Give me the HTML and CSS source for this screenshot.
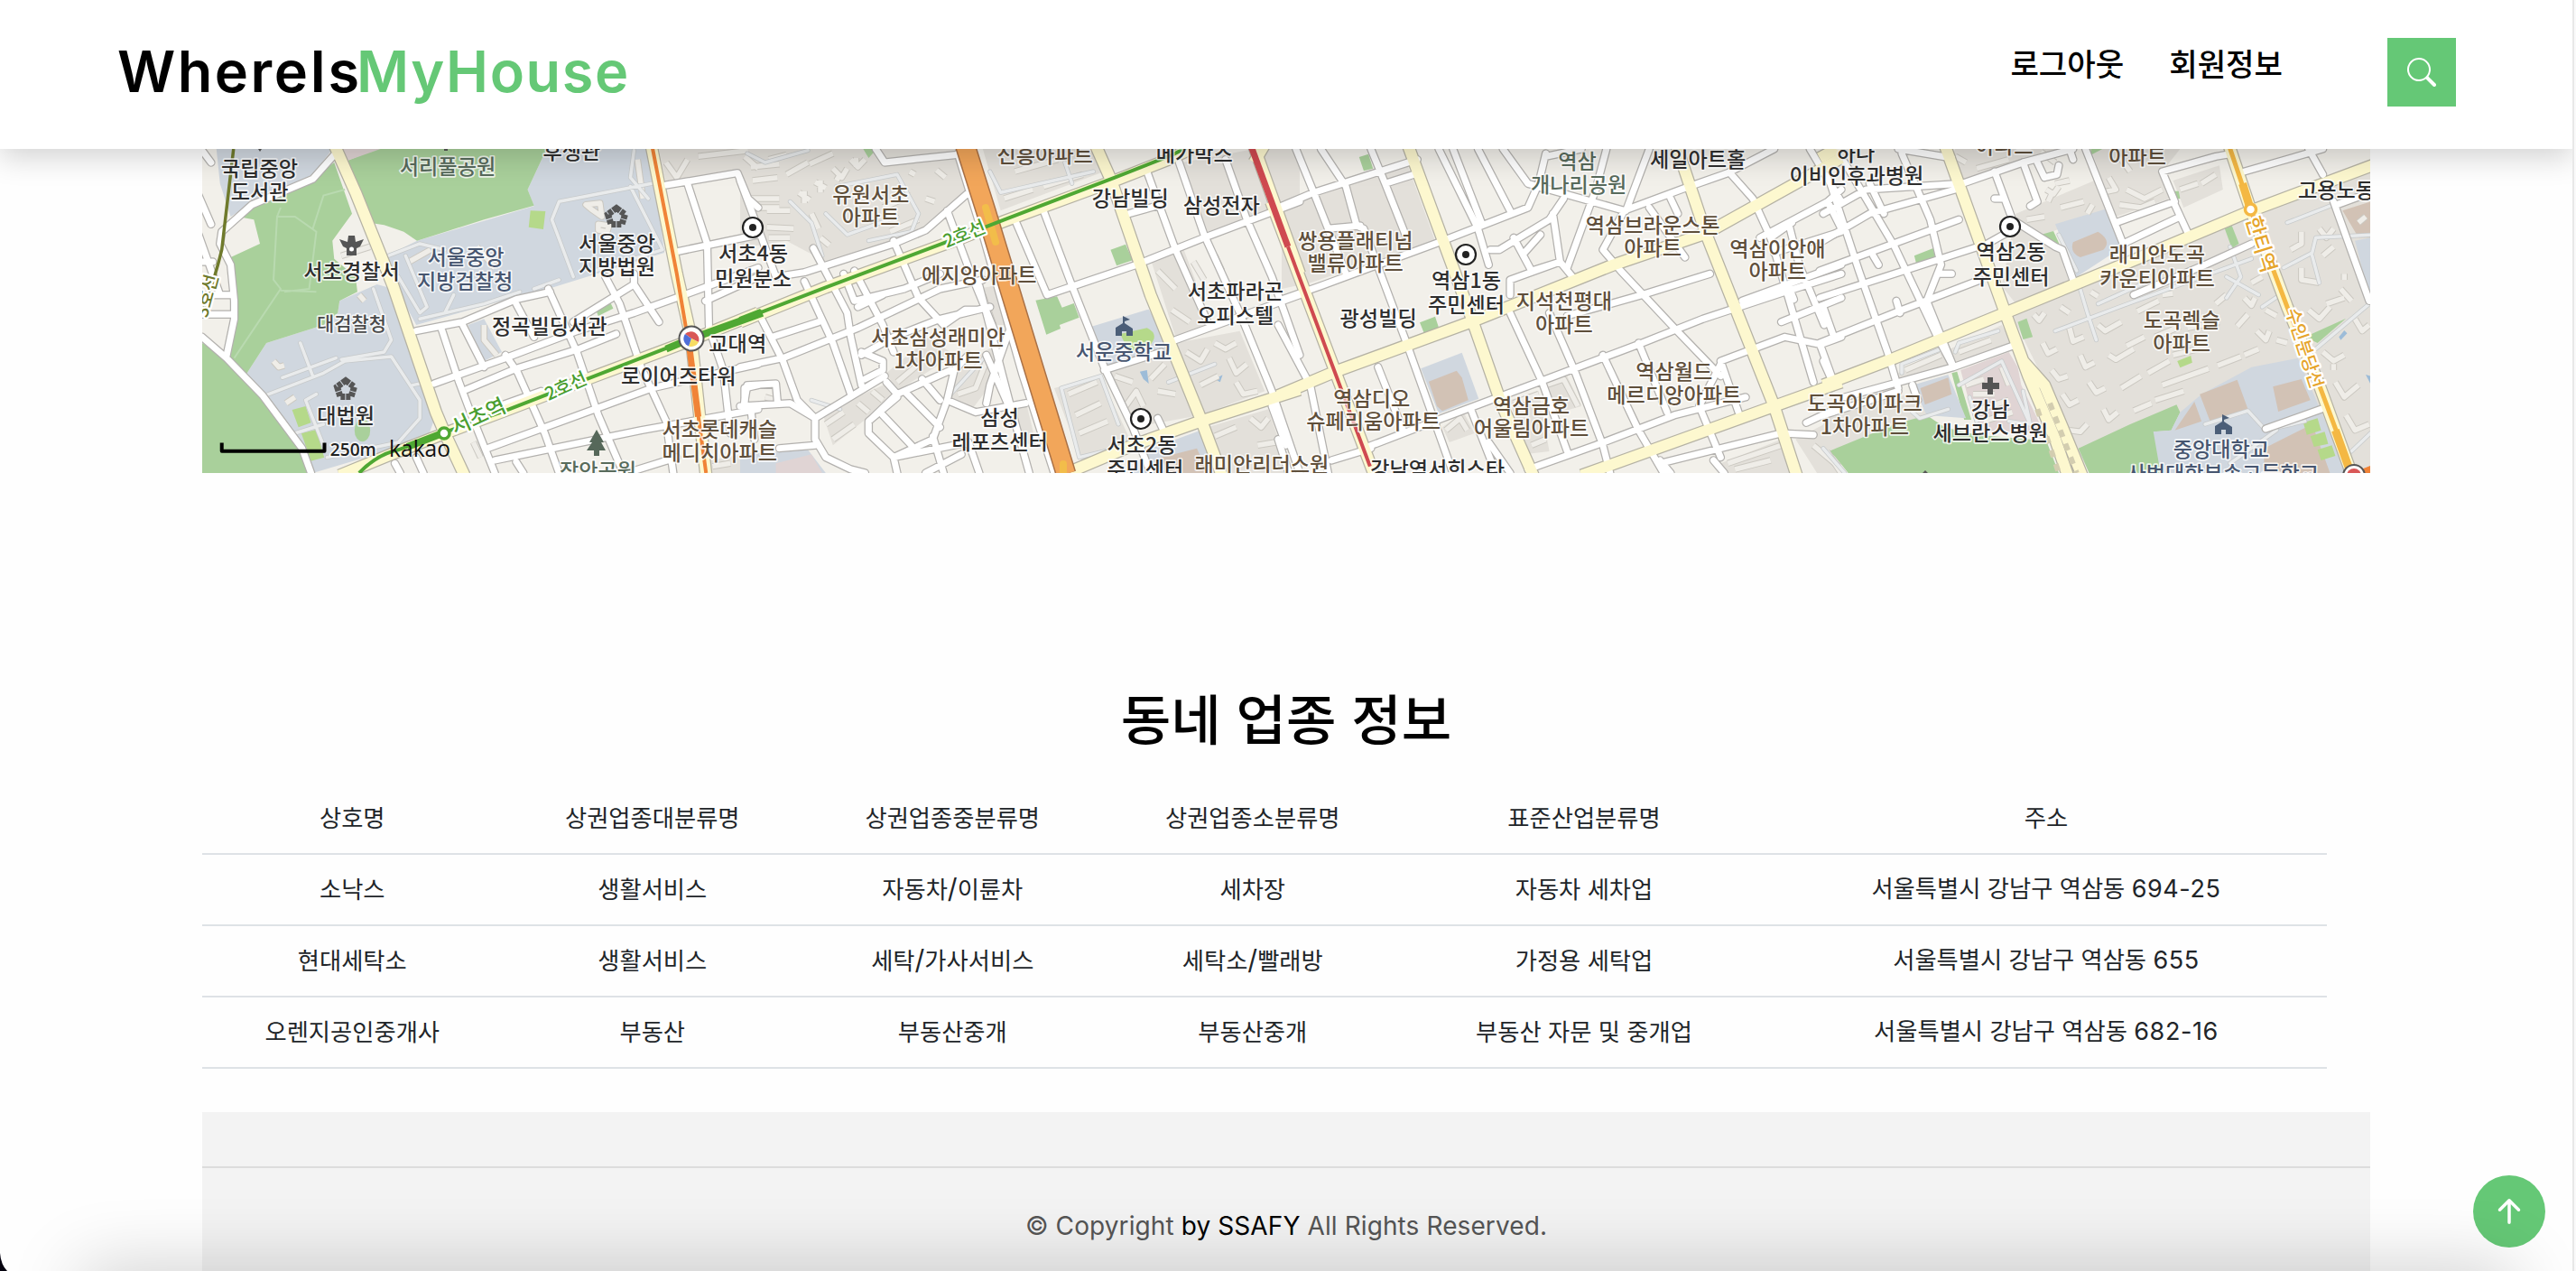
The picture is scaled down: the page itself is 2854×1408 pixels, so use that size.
FILE: index.html
```html
<!DOCTYPE html>
<html lang="ko">
<head>
<meta charset="utf-8">
<title>WhereIsMyHouse</title>
<link rel="stylesheet" href="styles.css">
</head>
<body>
<header class="header">
  <a class="logo"><span class="logo-where">WhereIs</span><span class="logo-house">MyHouse</span></a>
  <nav class="nav"><a>로그아웃</a><a>회원정보</a></nav>
  <button class="search" aria-label="검색">
    <svg width="32" height="32" viewBox="0 0 16 16" fill="currentColor"><path d="M11.742 10.344a6.5 6.5 0 1 0-1.397 1.398h-.001c.03.04.062.078.098.115l3.85 3.85a1 1 0 0 0 1.415-1.414l-3.85-3.85a1.007 1.007 0 0 0-.115-.1zM12 6.5a5.5 5.5 0 1 1-11 0 5.5 5.5 0 0 1 11 0z"/></svg>
  </button>
</header>

<main class="page">
  <svg class="map" viewBox="224 165 2402 359" width="2402" height="359">
    <defs>
      <g id="minor">
        <g transform="translate(220 160) scale(.3954 .3333)">
          <path d="M10 640L78 710L180 835L290 1010L315 1092M380 35L320 115L150 200L65 290L60 330L90 400L100 520V580L78 705M10 565H95M10 500H95M0 300L60 500M0 170L35 265M10 390H40M10 20L35 60"/>
          <path d="M610 620L740 590L890 515L985 490M980 480L1060 690L1120 900L1190 1092M680 610L730 790L765 900L830 1092M740 600L800 740M890 530L940 640M660 795L860 710L1060 620L1220 560L1350 505L1568 410M750 815L890 745L1065 680L1170 630M860 700L895 760L970 960L1010 1092"/>
          <path d="M1140 440L1180 530L1240 740L1310 920L1330 1092M1050 590L1220 465V430M1220 465L1290 590M770 900L960 820M810 1010L1110 880L1270 810L1568 730M830 1050L1240 950L1568 880M1310 135L1510 95L1540 180L1568 210M1345 355L1568 300M1370 130L1425 330L1430 600M1430 610L1470 750L1490 960M1200 1092L1340 1040M1420 520L1568 440M550 1060L565 1092M610 1040L630 1092M890 1055L910 1092M1530 880V810L1568 800"/>
        </g>
        <g transform="translate(820 160) scale(.3954 .3333)">
          <path d="M0 120L60 310L100 440M100 440L180 425L430 330L520 285L640 160M380 15L405 60L480 50L600 35M205 345L300 560L310 640L340 800M290 430L320 520L460 480L560 430M180 455L260 660L310 830M60 580L120 720L160 850L210 910M0 740L120 710L330 610L560 480L680 450M90 640L220 590M320 420L400 600L430 690M330 540L400 500M430 320L500 510L570 600L630 550H665M580 220L640 410L720 640M340 700L430 640L560 580L700 540M610 30L680 300L790 760L880 1092M670 470L760 880L810 1092"/>
          <path d="M350 780L400 750V720L340 690M405 770L210 910V980L240 1040L310 1080L350 1092M440 840L360 920V960L430 1040L540 980L580 850L600 750L640 700M440 830L590 750M460 820L560 940M510 780L560 850M400 900L480 1000M410 790L440 830L370 910M580 850L660 890L800 860M690 860L700 800L760 600M690 700L760 890M430 1040L440 1092M430 1040L640 990L670 1092M540 970L570 1092M0 870L140 860L210 910M10 870L20 800L100 795L105 860M30 880L40 980M110 1010L210 1000M520 1092L620 1030"/>
          <path d="M770 250L860 500L1110 400L1300 310L1568 190M850 220L930 470L1020 740L1100 940L1150 1092M1140 90L1220 350L1310 590M1230 60L1300 300L1400 560L1490 820L1568 1092M1360 50L1420 250L1490 440L1568 700M1090 230L1180 200M1220 650L1568 500M1020 750L1180 690M1170 910L1190 960M1490 870L1530 1000"/>
        </g>
        <g transform="translate(1420 160) scale(.3954 .3333)">
          <path d="M-10 210L90 160L380 50M40 15L90 160L180 430M110 15L180 140L210 270L230 280L350 660L480 1092M130 280L220 270M250 15L290 130L350 310M290 130L370 100M-10 520L110 470L430 330L690 210L720 130L740 30M440 15L550 280L580 400M480 15L560 260M550 15L640 220M620 15L690 130L960 220M740 40L840 15M910 15L880 150L800 410M1030 15L965 220M1380 15L1250 95L1130 145L960 220L900 350L950 420L1100 610L1230 770M1260 100L1320 180L1370 310L1490 790M1090 180L1110 230M1030 210L1130 375"/>
          <path d="M585 350H610L750 250L790 180M650 310L700 420M680 360L725 300M760 230L780 390L640 450V500M780 390L815 440M700 420L780 390M640 560L730 790L800 1020M750 560L820 750L900 1000L920 1092M900 700L1000 950L1070 1092M800 570L1010 500L1200 430M-10 600L80 800L130 1092M-10 980L20 1092M270 740L340 950M230 1010L450 910L720 790L1010 660L1180 580L1410 490L1568 430M530 880L600 1092M580 990L640 1092M1000 660L1080 890M1230 730L1170 870L1230 1040M1230 720L1280 890M690 1080L880 1000L1100 900L1300 840M1060 1060L1400 960L1490 965M1090 1092L1060 1050M1230 720L1410 640L1510 665L1568 640M1510 670L1550 800M1400 590L1568 510M1420 260L1450 400L1520 600M1530 190L1568 280M1340 310L1530 190L1568 150M1370 310L1430 260M1420 470L1435 515M1290 520L1568 400M1470 925L1568 870M1210 1050L1240 1092M140 1050L250 1010M1480 15L1568 190M1380 360L1568 290"/>
        </g>
        <g transform="translate(2020 160) scale(.3954 .3333)">
          <path d="M0 230L120 150L390 130L560 60L700 15M60 60L200 340L320 640L365 740M130 130L170 230M220 30L300 250L330 400L290 520L365 740M0 320L130 230L370 150M-10 420L380 250M-10 510L460 330L520 290M-10 660L210 555L440 450M20 130L100 420L180 690L210 810M0 540L30 640M0 720L30 800M140 370L155 400M330 430L360 430M205 520L215 560M250 800L265 850M60 840L365 740L530 670M0 900L210 820M210 15L360 45"/>
          <path d="M480 90L530 250L650 340L670 350L700 450M560 60L600 190L580 205M500 180H480M600 60L620 110L655 100L660 70M690 15L700 50M735 15L840 330L1000 240M820 260L985 190L950 90L1100 40L1150 30M985 200L1020 290M870 500L1070 400L1200 330M1180 90L1400 15M1360 15L1400 100M1430 190L1530 520M1440 200L1533 160M1240 945L1395 880"/>
        </g>
      </g>
      <g id="service">
        <g transform="translate(220 160) scale(.3954 .3333)">
          <path d="M235 775L385 710M285 660L320 770M185 835L350 760L410 720L540 705L620 850V910L560 990L360 1040M330 830L300 850L350 1000M490 480L540 650L520 690L400 715M270 960L350 930M600 800L640 790M510 380L620 330L690 350M580 370L640 540L620 560L560 440M690 560L715 500M620 580L800 530L900 490M1270 130L1010 190L990 250L1050 440M1220 20L1210 110L1260 180M1210 140L1300 350L1110 420M940 480L1010 450"/>
        </g>
        <g transform="translate(820 160) scale(.3954 .3333)">
          <path d="M140 190L200 260L230 370M270 140L440 100L500 230L480 290L360 320M240 230L300 300L440 240M20 30L70 60L190 20M700 90L730 160L990 90M910 60L930 130M900 810L1010 770L1060 930M900 810L950 1040L1090 1000M590 830L690 700M200 850L280 880M1200 790L1330 730"/>
        </g>
        <g transform="translate(2020 160) scale(.3954 .3333)">
          <path d="M720 480L740 560L765 650M650 620L830 540L1200 380M770 530L900 460M660 300L710 420M220 760V730L330 680M370 690L380 660L490 620M380 800L500 720L580 930M410 840L430 920M250 890L270 910L350 880M1070 930L1190 885L1240 950L1350 920M1300 260L1430 200M1130 440L1220 500M1290 410L1370 360L1380 310L1540 300M1140 340L1170 440L1130 510M1370 370L1390 460M1230 540L1280 500M1530 530L1380 680M1140 1060L1270 950M560 820L580 930L520 920M1480 1020L1533 960M0 1010L60 1092"/>
        </g>
      </g>
      <g id="major">
        <g transform="translate(220 160) scale(.3954 .3333)">
          <path d="M380 0L440 160L545 470L665 890L690 960L745 1100M395 1100L560 1020L690 960L870 880L1100 775L1370 655L1568 560M1268 0L1340 430L1380 640L1422 1100"/>
        </g>
        <g transform="translate(820 160) scale(.3954 .3333)">
          <path d="M0 590L240 475L600 320L740 255L1050 120L1200 50L1290 0M995 0L1040 120L1150 500L1290 910L1350 1100M920 1090L1100 1000L1290 920L1568 815M1438 0L1568 430M1470 0L1440 60"/>
        </g>
        <g transform="translate(1420 160) scale(.3954 .3333)">
          <path d="M-30 190L260 1100M353 0L530 570L615 860L705 1100M-10 835L150 755L530 590L930 400L1190 295L1568 45M1105 0L1190 300L1380 870L1443 1100M840 1100L1380 870L1568 790"/>
        </g>
        <g transform="translate(2020 160) scale(.3954 .3333)">
          <path d="M340 0L510 560L575 770L650 980L685 1100M510 560L560 720L620 800L670 940L725 1100M0 800L200 710L510 560L900 370L1200 220L1560 60M1136 0L1197 215L1300 540L1390 800L1482 1100M-10 45L60 0"/>
        </g>
      </g>
      <g id="blocks">
        <g transform="translate(220 160) scale(.3954 .3333)">
          <path d="M1085 200L1125 195L1130 240L1100 215ZM1120 265L1150 270L1145 290L1120 285ZM1230 50L1245 180M1310 60L1340 110L1370 50M1400 40L1540 20M210 720L225 740L240 735M245 860L270 840M400 370L480 340M590 390L650 350M780 340L830 410M800 600V650L835 700M770 990L790 1040M450 500L465 520M1440 1070L1490 1060M1530 40L1568 80"/>
        </g>
        <g transform="translate(820 160) scale(.3954 .3333)">
          <path d="M80 50L130 35M30 75L110 65M35 120L105 110M130 100L190 60M195 65L260 30M75 220L140 220M75 275L150 280M80 310L140 310M30 180L110 180M50 210L110 210M310 50L330 75L350 50M325 75V45M260 80L285 110L300 80M280 100L270 120M210 125L240 145M225 120V160M165 160L195 185M180 155V195M200 230L220 280M225 310L250 335M475 90L490 100M550 85L575 110M520 180L545 190M400 210L480 170M420 290L500 250M740 180L820 150M770 90L890 50M850 140L960 100M1170 420L1220 480M1210 550L1260 590M1270 390L1300 450M1330 370L1350 420M1250 690L1290 720L1310 680M1330 660L1360 680L1390 660M1370 710L1390 760L1420 730M1050 770L1100 790M1150 780L1190 730M1170 820L1220 830M1290 800L1340 770M1390 790L1410 830L1450 820M1080 870L1110 820L1130 870M920 830L1000 790M940 900L1010 860M950 960L1030 920M240 930L290 890M260 980L320 930M330 860L360 890M370 820L400 850M610 830L660 810L690 720M440 790L500 730M680 500L710 600M1330 970L1390 940M1430 910L1460 940L1480 910M1450 1000L1500 990M70 840L100 850M770 860V940"/>
        </g>
        <g transform="translate(1420 160) scale(.3954 .3333)">
          <path d="M460 950L500 910L520 950M740 800L790 780L830 870M650 860L720 830M700 1000L740 980M1250 1060L1400 1000M1270 1080L1370 1050M1490 1000L1560 1070"/>
        </g>
        <g transform="translate(2020 160) scale(.3954 .3333)">
          <path d="M430 80L520 50M370 40L400 60M610 25L650 60M625 150L645 165L660 140M640 165L630 190M650 130L690 120M570 250L620 240M665 210L730 190M740 230L755 200M800 110L820 150L780 160M850 150L900 180L950 150M830 200L890 210L930 190M830 40L860 90M1000 150L1050 130M1060 130L1100 100M770 600L790 620L835 590M800 700L820 715L870 680M850 670L900 640M930 640L1000 605M1020 610L1110 590M1160 605L1190 565M1100 530L1130 500M950 500L980 495M880 555L940 520M750 490L770 505M590 565L605 585L620 560M665 540L690 560M690 610L700 655L730 640M615 660L630 695L655 680M720 700L735 740L760 725M640 750L660 780L685 770M745 790L765 825L790 810M670 830L690 865L715 850M785 880L800 915L825 890M690 950L720 955L740 930M835 810L890 770M910 760L970 720M980 700L1050 680M950 800L1080 745M1105 735L1170 705M1180 700L1220 680M870 885L920 860M930 850L1010 820M1180 510L1200 535L1210 510M1215 620L1240 650L1250 620M1270 650L1300 660M1310 350L1340 330V290M1390 280L1410 310L1430 280M1400 370L1430 340M1340 410V450L1390 460M1360 550L1390 580L1420 540M1410 530L1460 510M1450 480L1480 520M1490 580L1510 620L1530 600M1400 690L1430 720L1460 700M1430 730V750M1435 790L1460 840L1500 800M1465 900L1490 950L1530 930M1200 460L1230 440M1240 550L1270 570M380 690L470 650M230 750L330 700M400 800L450 780M420 830L480 830M440 880L520 850M450 920L530 890M500 740L520 800M10 1020L50 1092M1500 260L1520 240M1460 430V450"/>
        </g>
      </g>
      <symbol id="office" viewBox="0 0 26 26"><circle cx="13" cy="13" r="11" fill="#fff" stroke="#222" stroke-width="2.2"/><circle cx="13" cy="13" r="4" fill="#222"/></symbol>
      <symbol id="court" viewBox="0 0 28 28"><path d="M14 4.500L23.500 11.500L20 22.500H8L4.500 11.500Z" fill="none" stroke="#555" stroke-width="7" stroke-dasharray="5 1"/></symbol>
      <symbol id="school" viewBox="0 0 20 22"><path d="M9 0L17 4L11 6V8L20 14V22H13V17H8V22H1V13L9 8Z" fill="#4b5e78"/></symbol>
    </defs>

    <rect x="224" y="165" width="2402" height="359" fill="#f2f0ea"/>

    <g class="land" transform="translate(220 160) scale(.3954 .3333)">
      <path class="civic" d="M50 15H375L320 100L150 195L90 240L60 130ZM975 15H1270L1305 360L980 480L880 510L610 600L510 380L612 320L940 205L922 150ZM500 465L530 475L665 900L640 980L320 1092L290 1010L130 770L190 660L350 600L390 560L395 520ZM755 600L800 580L850 690L800 720Z"/>
      <path class="park" d="M500 15H975L922 150L940 203L800 250L612 320L575 290L520 268L487 262L415 55ZM380 60L320 115L150 200L110 240L155 250L172 330L85 378L100 500L105 570L78 705L130 770L190 660L350 600L390 560L395 520L445 490L440 440L380 380L375 320L430 230ZM10 660L78 710L180 835L290 1010L310 1092H10ZM1113 550L1155 528L1162 545L1120 570Z"/>
      <path class="trail" d="M220 240H270L330 290L310 480L240 490M230 210L220 240L210 450L230 480L100 710M230 485L330 490M410 150L350 170L320 280"/>
      <path class="pink" d="M395 15H510L415 55Z"/>
      <path class="apt" d="M1290 15H1568V240L1510 95L1310 130ZM1410 1092L1430 1050L1568 1020V1092Z"/>
      <path class="field" d="M930 220L972 222L966 282L925 275ZM262 882L300 870L315 925L280 940ZM288 960L330 948L352 1040L315 1052Z"/>
      <ellipse class="park" cx="459" cy="950" rx="22" ry="38"/>
    </g>
    <g class="land" transform="translate(820 160) scale(.3954 .3333)">
      <path class="apt" d="M0 15H610L640 150L560 250L440 320L240 390L130 320L0 345ZM680 15H995L1020 90L730 220ZM1240 60L1440 15H1568V180L1310 290ZM1150 380L1240 340L1320 590L1220 640ZM1020 760L1220 660L1400 620L1470 820L1290 900L1100 940ZM880 810L1010 770L1100 1000L960 1060ZM230 890L420 790L440 830L260 1000ZM590 760L710 670L740 740L650 880L590 850ZM665 480L710 470L750 600H690ZM1310 940L1480 880L1540 1092H1350ZM760 860L800 850L830 1000L780 990ZM410 760L530 640L600 700L440 820Z"/>
      <path class="park" d="M828 518L888 505L902 542L935 528L950 575L895 600L898 612L858 632ZM1038 350L1080 332L1100 385L1055 403ZM345 15H383L360 45Z"/>
      <path class="civic" d="M985 605L1145 548L1215 690L1030 740ZM1130 1020L1290 950L1340 1092H1100ZM0 1030L190 1015L240 1092H0Z"/>
      <path class="brown" d="M1180 1040L1280 1010L1310 1092H1200Z"/><path class="pink" d="M100 1060L200 1030L230 1092H100Z"/>
      <path class="field" d="M1065 630L1140 610Q1175 630 1150 665L1090 690Z"/>
      <path class="water" d="M1120 755L1140 750L1145 795L1130 780ZM1330 780L1352 766L1345 790Z"/>
    </g>
    <g class="land" transform="translate(1420 160) scale(.3954 .3333)">
      <path class="apt" d="M0 200L90 160L350 60L430 320L80 460L0 480ZM720 800L800 770L840 870L750 900ZM450 940L510 890L540 960L470 990ZM640 850L720 820L750 1020L680 1030ZM1230 1060L1400 980L1430 1092H1240ZM1440 980L1568 900V1092H1500Z"/>
      <path class="park" d="M217 42L243 32L256 80L230 88ZM387 592L430 572L440 608L400 630ZM1530 1020L1568 1015V1050Z"/>
      <path class="civic" d="M390 745L505 692L552 845L440 895Z"/>
      <path class="brown" d="M412 788L490 752L505 775L523 850L450 886L435 870Z"/>
    </g>
    <g class="land" transform="translate(2020 160) scale(.3954 .3333)">
      <path class="apt" d="M530 570L900 390L1210 235L1533 90V1092H745ZM360 40L400 130L560 60L700 15H370ZM540 230L760 120L800 220L640 290L690 460L540 530L500 470ZM750 15H1000L950 90L970 180L820 240ZM980 120L1110 70L1120 150L1010 210ZM210 760L500 600L530 660L220 800ZM0 900L240 830L300 900L60 1010L0 1010Z"/>
      <path class="park" d="M20 1018L200 930L290 900L340 940L430 965L625 985L660 1092H70ZM650 960L710 1092H690ZM715 1010L860 930L990 865L1000 890L975 950L925 955L960 1050L945 1092H745ZM255 370L308 345L315 382L262 402ZM545 590L570 578L587 640L560 648ZM1125 280L1145 270L1165 330L1145 345ZM610 300L645 288L662 332L630 320ZM1350 640L1465 578L1385 660ZM360 760L375 755L415 915H395ZM750 15H782L750 35ZM980 155H996L1000 180L988 182Z"/>
      <path class="civic" d="M650 265L790 215L840 340L710 440ZM1060 830L1200 740L1330 710L1400 900L1470 1092H945L925 955L975 950L1000 890ZM250 800L350 765L400 910L290 900ZM1490 320L1533 310V520Z"/>
      <path class="brown" d="M1055 830L1160 782L1190 880L1085 923ZM1260 805L1340 780L1365 850L1275 888ZM1235 1010L1370 930L1420 1092H1235ZM700 325L770 290Q810 320 785 350L720 375Q690 360 700 325ZM1455 220L1533 190V310H1500ZM272 810L350 775L360 830L285 865ZM985 950L1040 855L1060 920Z"/>
      <path class="pink" d="M385 750L520 690L545 740L555 800L620 960L430 950Z"/>
      <path class="field" d="M992 720L1030 702L1034 725L1000 742ZM1345 925L1385 910L1395 950L1355 965ZM1365 970L1405 955L1415 995L1375 1005ZM1385 1015L1425 1000L1435 1035L1395 1050Z"/>
      <path class="water" d="M1445 640L1460 618L1468 628L1450 650ZM1520 765L1533 770V795Z"/>
    </g>

    <use href="#blocks" class="block-case"/><use href="#blocks" class="block-fill"/>
    <use href="#service" class="service-case"/><use href="#service" class="service-fill"/>
    <use href="#minor" class="minor-case"/>
    <use href="#major" class="major-case"/>
    <use href="#minor" class="minor-fill"/>
    <use href="#major" class="major-fill"/>

    <!-- expressway -->
    <g fill="none"><path d="M1069 160L1092 233L1181 525" stroke="#aa7146" stroke-width="23"/><path d="M1069 160L1092 233L1181 525" stroke="#f2a65a" stroke-width="20"/>
    <path d="M1092 230L1103 268M1178 514V524" stroke="#f2bd4a" stroke-width="8" stroke-linecap="round"/></g>

    <!-- subway lines -->
    <g fill="none" transform="translate(220 160) scale(.3954 .3333)" class="line">
      <path d="M98 15L65 350Q45 450 10 560" stroke="#6f7a2c" stroke-width="3.5"/>
      <path d="M450 1092Q500 1030 560 1015L690 957L870 880L1370 650" stroke="#4fa833" stroke-width="4"/>
      <path d="M585 1005L690 957M1310 680L1370 650L1580 560" stroke="#4fa833" stroke-width="8"/>
      <path d="M1270 0L1340 430L1370 640L1422 1092" stroke="#f08337" stroke-width="4"/>
      <path d="M1376 680L1400 905" stroke="#f08337" stroke-width="7"/>
    </g>
    <g fill="none" transform="translate(820 160) scale(.3954 .3333)" class="line">
      <path d="M0 585L240 475L600 315L740 250L1050 110L1210 35L1260 5" stroke="#4fa833" stroke-width="4"/>
      <path d="M0 585L60 557" stroke="#4fa833" stroke-width="8"/>
      <path d="M1430 0L1535 340" stroke="#cf4a50" stroke-width="7"/>
      <path d="M1535 340L1765 1070" stroke="#cf4a50" stroke-width="4"/>
    </g>
    <g fill="none" transform="translate(2020 160) scale(.3954 .3333)" class="line">
      <path d="M1136 0L1197 215L1300 540L1390 800L1440 960" stroke="#f4b843" stroke-width="5"/>
      <path d="M1175 130L1197 215M1435 950L1478 1092" stroke="#f4b843" stroke-width="9"/>
      <path d="M600 880L660 1092M635 860L710 1092" stroke="#d3cdb0" stroke-width="6" stroke-dasharray="8 8"/>
    </g>
    <circle cx="2493.500" cy="232" r="6" fill="#fff" stroke="#f4b843" stroke-width="3.500"/>
    <circle cx="492" cy="480" r="6" fill="#fff" stroke="#4fa833" stroke-width="3.500"/>
    <g><circle cx="766" cy="375" r="13.500" fill="#fff" stroke="#555" stroke-width="2"/><path d="M766 375L759 370A9 9 0 0 1 774 379Z" fill="#d95757"/><path d="M766 375L774 379A9 9 0 0 1 763 383.500Z" fill="#f7dc62"/><path d="M766 375L763 383.500A9 9 0 0 1 759 370Z" fill="#4f6fd8"/></g>
    <g><path d="M2606 524L2626 516V524Z" fill="#f08337"/><circle cx="2608" cy="527" r="12" fill="#fff" stroke="#555" stroke-width="2"/><circle cx="2608" cy="527" r="8" fill="#d95757"/></g>

    <use href="#office" x="821" y="239" width="26" height="26"/>
    <use href="#office" x="1611" y="269" width="26" height="26"/>
    <use href="#office" x="2214" y="238" width="26" height="26"/>
    <use href="#office" x="1251" y="451" width="26" height="26"/>
    <use href="#court" x="669" y="226" width="28" height="28"/>
    <use href="#court" x="369" y="417" width="28" height="28"/>
    <use href="#school" x="1235" y="350" width="20" height="22"/>
    <use href="#school" x="2453" y="459" width="20" height="22"/>
    <path d="M376 265L385 268L386 261H393L394 268L403 265L399 273L395 275V283H384V275L380 273Z" fill="#555"/><circle cx="389.500" cy="276" r="2.500" fill="#fff"/>
    <path d="M661 476L669 490H666L671 499H664V505H658V499H650L656 490H653Z" fill="#56685a"/>
    <path d="M2202 418H2208V424H2215V431H2208V437H2202V431H2196V424H2202Z" fill="#555"/>
    <path d="M2130 524L2133 521L2136 524ZM492 165H496V167H492ZM286 165H290L288 168Z" fill="#555"/>

    <!-- place names -->
    <g class="labels" transform="scale(1.8202)">
      <g class="dark">
        <text x="158" y="107">국립중앙</text><text x="158" y="121.500">도서관</text>
        <text x="348" y="96.500">후생관</text>
        <text x="214" y="169.500">서초경찰서</text>
        <text x="375.500" y="153">서울중앙</text><text x="375.500" y="167">지방법원</text>
        <text x="458.500" y="158.500">서초4동</text><text x="458.500" y="174">민원분소</text>
        <text x="334.500" y="203.500">정곡빌딩서관</text>
        <text x="449" y="213.500">교대역</text><text x="413" y="233.500">로이어즈타워</text>
        <text x="210.500" y="257.500">대법원</text>
        <text x="688" y="125.500">강남빌딩</text><text x="743.500" y="129.500">삼성전자</text><text x="727" y="98.500">메가박스</text>
        <text x="752" y="182">서초파라곤</text><text x="752" y="196.500">오피스텔</text>
        <text x="608.500" y="259">삼성</text><text x="608.500" y="273.500">레포츠센터</text>
        <text x="695" y="275">서초2동</text><text x="697" y="290">주민센터</text>
        <text x="839" y="198.500">광성빌딩</text>
        <text x="892.500" y="175">역삼1동</text><text x="892.500" y="190">주민센터</text>
        <text x="875" y="290">강남역서희스타</text>
        <text x="1033.500" y="101.500">세일아트홀</text>
        <text x="1129.500" y="98">하나</text><text x="1130" y="111.500">이비인후과병원</text>
        <text x="1224" y="157.500">역삼2동</text><text x="1224" y="173">주민센터</text>
        <text x="1211.500" y="254">강남</text><text x="1211.500" y="268">세브란스병원</text>
        <text x="1428" y="120.500">고용노동부</text>
      </g>
      <g class="civil">
        <text x="283.500" y="161">서울중앙</text><text x="283" y="176">지방검찰청</text>
        <text x="684" y="218.500">서운중학교</text>
        <text x="1352" y="278">중앙대학교</text><text x="1353" y="293">사범대학부속고등학교</text>
      </g>
      <text class="plain" x="214" y="201">대검찰청</text>
      <g class="green"><text x="272.500" y="106">서리풀공원</text><text x="364" y="291">장안공원</text><text x="960" y="103">역삼</text><text x="961" y="117">개나리공원</text></g>
      <g class="home">
        <text x="530" y="123">유원서초</text><text x="530" y="137">아파트</text>
        <text x="596" y="172">에지앙아파트</text><text x="636" y="99">신흥아파트</text>
        <text x="571" y="210">서초삼성래미안</text><text x="571" y="224">1차아파트</text>
        <text x="438" y="266">서초롯데캐슬</text><text x="438" y="280">메디치아파트</text>
        <text x="768" y="287.500">래미안리더스원</text>
        <text x="825" y="151">쌍용플래티넘</text><text x="825" y="165">밸류아파트</text>
        <text x="1006" y="141.500">역삼브라운스톤</text><text x="1006" y="155.500">아파트</text>
        <text x="1082" y="156">역삼이안애</text><text x="1082" y="170">아파트</text>
        <text x="952" y="188">지석천평대</text><text x="952" y="202">아파트</text>
        <text x="835" y="247">역삼디오</text><text x="836" y="261">슈페리움아파트</text>
        <text x="932" y="251.500">역삼금호</text><text x="932" y="265.500">어울림아파트</text>
        <text x="1019" y="230.500">역삼월드</text><text x="1019" y="245">메르디앙아파트</text>
        <text x="1135" y="250">도곡아이파크</text><text x="1135" y="264">1차아파트</text>
        <text x="1220" y="93.500">아파트</text><text x="1301" y="100">아파트</text>
        <text x="1313" y="159.500">래미안도곡</text><text x="1313" y="174">카운티아파트</text>
        <text x="1328" y="199.500">도곡렉슬</text><text x="1328" y="213.500">아파트</text>
      </g>
      <g class="metro">
        <text transform="translate(293 257.500) rotate(-25)">서초역</text>
        <text class="small" transform="translate(346 238.500) rotate(-24)">2호선</text>
        <text class="small" transform="translate(588.500 146) rotate(-22)">2호선</text>
        <text class="olive small" transform="translate(129.500 181) rotate(-75)">3호선</text>
        <text class="amber" transform="translate(1372 150) rotate(73)">한티역</text>
        <text class="amber small" transform="translate(1399 213) rotate(72)">수인분당선</text>
      </g>
      <path d="M135 269.500V274.500H197.500V269.500" fill="none" stroke="#000" stroke-width="4"/>
      <text class="scale" x="215" y="277.500">250m</text>
      <text class="brand" x="255.500" y="278">kakao</text>
    </g>
  </svg>

  <h2 class="title">동네 업종 정보</h2>

  <table class="shops">
    <colgroup><col class="c-std"><col class="c-std"><col class="c-std"><col class="c-std"><col class="c-industry"><col class="c-address"></colgroup>
    <thead><tr><th>상호명</th><th>상권업종대분류명</th><th>상권업종중분류명</th><th>상권업종소분류명</th><th>표준산업분류명</th><th>주소</th></tr></thead>
    <tbody>
      <tr><td>소낙스</td><td>생활서비스</td><td>자동차<span class="slash">/</span>이륜차</td><td>세차장</td><td>자동차 세차업</td><td>서울특별시 강남구 역삼동 <span class="num">694-25</span></td></tr>
      <tr><td>현대세탁소</td><td>생활서비스</td><td>세탁<span class="slash">/</span>가사서비스</td><td>세탁소<span class="slash">/</span>빨래방</td><td>가정용 세탁업</td><td>서울특별시 강남구 역삼동 <span class="num">655</span></td></tr>
      <tr><td>오렌지공인중개사</td><td>부동산</td><td>부동산중개</td><td>부동산중개</td><td>부동산 자문 및 중개업</td><td>서울특별시 강남구 역삼동 <span class="num">682-16</span></td></tr>
    </tbody>
  </table>

  <footer class="footer">
    <p class="copyright">© Copyright <span>by SSAFY</span> All Rights Reserved.</p>
  </footer>
</main>

<div class="scroll-edge"></div>
<a class="to-top" aria-label="맨 위로"><svg width="56" height="56" viewBox="0 0 16 16" fill="currentColor"><path fill-rule="evenodd" d="M8 12a.5.5 0 0 0 .5-.5V5.707l2.146 2.147a.5.5 0 0 0 .708-.708l-3-3a.5.5 0 0 0-.708 0l-3 3a.5.5 0 1 0 .708.708L7.5 5.707V11.500a.5.5 0 0 0 .5.5z"/></svg></a>
<div class="window-shade"></div>
<svg class="window-corner" width="8" height="20" viewBox="0 0 8 20"><path d="M0 0Q1 13 8 20H0Z" fill="#05030f"/></svg>
</body>
</html>
```
FILE: styles.css
```css
* { box-sizing: border-box; }

html, body { height: 100%; overflow: hidden; }

body {
  position: relative;
  margin: 0;
  background: #fefefe;
  color: #212529;
  font-family: Inter, "Noto Sans CJK KR", sans-serif;
  font-size: 26px;
}

.header {
  position: relative;
  z-index: 2;
  display: flex;
  align-items: flex-start;
  width: 2850px;
  height: 165px;
  padding: 42px 129px 0 130px;
  background: #fff;
  box-shadow: 0 10px 30px rgba(0, 0, 0, .17);
}

.logo {
  display: flex;
  margin-right: auto;
  font-size: 63px;
  font-weight: 600;
  line-height: 74px;
  color: #000;
}
.logo-where { width: 265px; letter-spacing: 2.500px; }
.logo-house { color: #65c876; letter-spacing: 1.600px; }

.nav {
  display: flex;
  gap: 50px;
  margin-right: 116px;
  color: #000;
  font: 500 34.200px/55px "Noto Sans CJK KR", sans-serif;
}

.search {
  display: flex;
  align-items: center;
  justify-content: center;
  width: 76px;
  height: 76px;
  padding: 0;
  border: 0;
  background: #65c876;
  color: #fff;
}

.page { width: 2402px; margin-left: 224px; }

/* map */
.map { display: block; }
.map path { vector-effect: non-scaling-stroke; }
.park { fill: #a9d09b; }
.trail { fill: none; stroke: #b9dab0; stroke-width: 2px; }
.civic { fill: #d0d7df; }
.apt { fill: #e3e0da; }
.pink { fill: #e0d4d4; }
.brown { fill: #d2c2b5; }
.field { fill: #b5d98a; }
.water { fill: #9dbcd8; }
#blocks, #service, #minor, #major { fill: none; stroke-linejoin: round; }
#service, #minor { stroke-linecap: round; }
.block-case { stroke: #cbc8c1; stroke-width: 7.500px; }
.block-fill { stroke: #efede8; stroke-width: 5.500px; }
.service-case { stroke: #c6c9ca; stroke-width: 5px; }
.service-fill { stroke: #e9ebec; stroke-width: 3.500px; }
.minor-case { stroke: #b3b1ae; stroke-width: 9.500px; }
.minor-fill { stroke: #fff; stroke-width: 7px; }
.major-case { stroke: #b5b2a4; stroke-width: 14.500px; }
.major-fill { stroke: #fdf8cf; stroke-width: 12px; }

.labels {
  font: 500 12.700px "Noto Sans CJK KR", sans-serif;
  text-anchor: middle;
  paint-order: stroke;
  stroke: rgba(255, 255, 255, .8);
  stroke-width: 1.800px;
  stroke-linejoin: round;
}
.dark { fill: #2e2e2e; }
.plain { fill: #4a4a4a; font-size: 11.500px; }
.civil { fill: #475670; }
.green { fill: #586b5c; }
.home { fill: #5f4f3b; }
.metro { fill: #4a9e30; stroke: #fff; stroke-width: 2.500px; }
.small { font-size: 11px; }
.olive { fill: #6f7a2c; }
.amber { fill: #e6a52c; }
.scale { font: 600 10.500px "Open Sans", sans-serif; fill: #222; }
.brand { font: 500 13.500px "Open Sans", sans-serif; fill: #111; stroke: none; }

.title {
  margin: 225px 0 0;
  color: #000;
  font: 500 60.300px/90px "Noto Sans CJK KR", sans-serif;
  text-align: center;
}

.shops {
  width: 2354px;
  margin-top: 29px;
  border-collapse: separate;
  border-spacing: 0;
  table-layout: fixed;
  font-family: "Noto Sans CJK KR", sans-serif;
  font-size: 26.300px;
  text-align: center;
}
.c-std { width: 332.500px; }
.c-industry { width: 402px; }
.c-address { width: 622px; }
.shops th, .shops td {
  height: 79px;
  padding: 0 0 3px;
  border-bottom: 2px solid #dee2e6;
  font-weight: 400;
  line-height: 40px;
}
.num { font-family: Inter, sans-serif; font-size: 27px; letter-spacing: .6px; }
.slash { font-family: Inter, sans-serif; font-size: 30px; line-height: 1; }

.footer {
  height: 176px;
  margin-top: 48px;
  padding-top: 60px;
  background: #f3f3f3;
}
.copyright {
  margin: 0;
  padding-top: 43px;
  border-top: 2px solid #dcdcdc;
  color: #555;
  font-size: 28px;
  letter-spacing: .1px;
  line-height: 42px;
  text-align: center;
}
.copyright span { color: #000; }

.scroll-edge {
  position: absolute;
  top: 0;
  right: 0;
  bottom: 0;
  z-index: 3;
  width: 4px;
  border-left: 2px solid #e8e8e8;
  background: #fafafa;
}

.to-top {
  position: absolute;
  left: 2740px;
  top: 1302px;
  display: flex;
  align-items: center;
  justify-content: center;
  width: 80px;
  height: 80px;
  border-radius: 50%;
  background: #65c876;
  color: #fff;
}

.window-shade {
  position: absolute;
  left: 90px;
  right: 70px;
  bottom: -60px;
  z-index: 4;
  height: 60px;
  box-shadow: 0 0 80px rgba(0, 0, 0, .22);
}
.window-corner { position: absolute; left: 0; bottom: 0; z-index: 5; }
```
